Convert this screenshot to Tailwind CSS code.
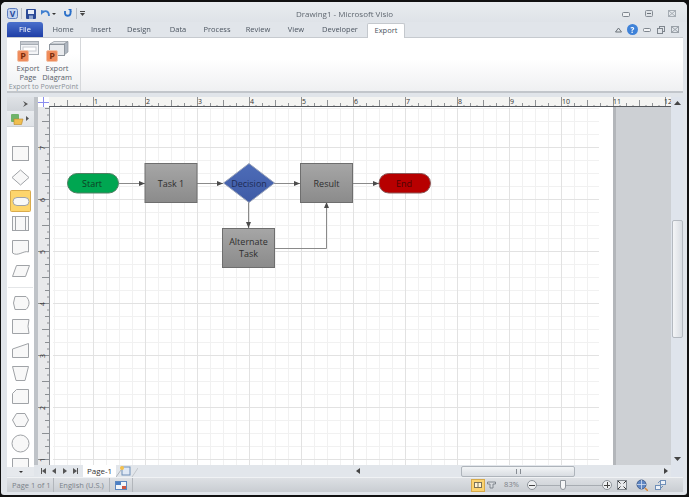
<!DOCTYPE html>
<html lang="en">
<head>
<meta charset="UTF-8">
<title>Drawing1 - Microsoft Visio</title>
<script src="https://cdn.jsdelivr.net/npm/@tailwindcss/browser@4"></script>
</head>
<body class="w-[689px] h-[497px] overflow-hidden bg-[#111] font-['Open_Sans',sans-serif] text-[7.5px] text-[#4c5560]">
<div class="h-full pt-[2px] pb-[2px] pl-[1px] pr-[2px] blur-[0.3px]">
<div class="h-full flex flex-col rounded-t-[5px] rounded-b-[3px] bg-[#e1e5ea] pl-[6px] pr-[4px] pb-[3px]">

  <!-- title bar -->
  <div class="h-[20px] -ml-[6px] -mr-[4px] pl-[6px] flex items-center relative shrink-0 bg-[linear-gradient(#e9ecef,#dfe3e8)] rounded-t-[5px]">
    <div class="flex items-center pt-[3px]">
      <svg width="11" height="11" viewBox="0 0 11 11"><rect x=".5" y=".5" width="10" height="10" rx="2" fill="#c3d4f0" stroke="#5f7fc0"/><text x="5.500" y="9" text-anchor="middle" font-size="8.500" font-weight="700" fill="#28489c">V</text></svg>
      <div class="w-px h-[11px] bg-[#b9bec5] ml-[3px]"></div>
      <svg width="10" height="10" viewBox="0 0 10 10" class="ml-[4px]"><rect width="10" height="10" rx="1" fill="#2c4b98"/><rect x="2" y="1" width="6" height="4" fill="#e8eef8"/><rect x="3" y="6.500" width="4" height="3.500" fill="#8fa6d0"/></svg>
      <svg width="9" height="8" viewBox="0 0 9 8" class="ml-[5px]"><path d="M2 2.500 C4 0 8 1 8 6" fill="none" stroke="#3f7fd0" stroke-width="1.800"/><path d="M0 0 L4 1 L0 5 Z" fill="#3f7fd0"/></svg>
      <span class="w-0 h-0 ml-[2px] border-x-[2px] border-t-[2px] border-x-transparent border-t-[#333]"></span>
      <svg width="9" height="9" viewBox="0 0 9 9" class="ml-[7px]"><path d="M2 2 V4.500 A2.800 2.800 0 0 0 7.500 4.500 V2" fill="none" stroke="#2a6fc8" stroke-width="1.800"/><path d="M5 0 L8.500 0 L8.500 3.500 Z" fill="#2a6fc8"/></svg>
      <div class="w-px h-[11px] bg-[#b9bec5] ml-[4px]"></div>
      <svg width="5" height="5" viewBox="0 0 5 5" class="ml-[3px]"><rect width="5" height="1" fill="#444"/><path d="M0 2 H5 L2.500 5 Z" fill="#444"/></svg>
    </div>
    <div class="absolute left-0 right-0 top-[6px] text-center text-[8px] text-[#5f6770] pl-[1px]">Drawing1 - Microsoft Visio</div>
    <div class="ml-auto flex items-center gap-[15px] pr-[11px] pt-[3px]">
      <svg width="8" height="6" viewBox="0 0 8 6"><rect x=".5" y="1.500" width="7" height="4" rx="1" fill="#eef0f2" stroke="#7f868e"/></svg>
      <svg width="8" height="7" viewBox="0 0 8 7"><rect x=".5" y=".5" width="7" height="6" rx="1" fill="#dfe3e7" stroke="#868d95"/><rect x="2" y="3" width="4" height="1" fill="#6c737a"/></svg>
      <svg width="8" height="7" viewBox="0 0 8 7"><rect x=".5" y=".5" width="7" height="6" fill="none" stroke="#a6adb4"/><path d="M1 1 L7 6 M7 1 L1 6" stroke="#a6adb4"/></svg>
    </div>
  </div>

  <!-- tabs -->
  <div class="h-[15px] flex items-stretch shrink-0 relative">
    <div class="w-[36px] rounded-t-[3px] bg-[linear-gradient(#4a70cc,#1f3ea6)] text-white flex items-center justify-center">File</div>
    <div class="w-[40px] flex items-center justify-center">Home</div>
    <div class="w-[36px] flex items-center justify-center">Insert</div>
    <div class="w-[40px] flex items-center justify-center">Design</div>
    <div class="w-[38px] flex items-center justify-center">Data</div>
    <div class="w-[40px] flex items-center justify-center">Process</div>
    <div class="w-[42px] flex items-center justify-center">Review</div>
    <div class="w-[34px] flex items-center justify-center">View</div>
    <div class="w-[54px] flex items-center justify-center">Developer</div>
    <div class="w-[38px] mt-px -mb-px bg-white border border-b-0 border-[#c4c8cd] rounded-t-[2px] flex items-center justify-center z-10">Export</div>
    <div class="ml-auto flex items-center gap-[5px] pr-[4px]">
      <svg width="7" height="6" viewBox="0 0 7 6"><path d="M.5 5 L3.500 1 L6.500 5 Z" fill="none" stroke="#6b7279"/></svg>
      <div class="w-[11px] h-[11px] rounded-full bg-[#3f82d8] text-white text-[8px] font-bold leading-[11px] text-center">?</div>
      <svg width="8" height="4" viewBox="0 0 8 4"><rect x=".5" y=".5" width="7" height="3" rx="1" fill="#f2f3f5" stroke="#7f868e"/></svg>
      <svg width="8" height="8" viewBox="0 0 8 8" class="ml-px"><rect x="2.500" y=".5" width="5" height="5" fill="none" stroke="#7f868e"/><rect x=".5" y="2.500" width="5" height="5" fill="#e1e5ea" stroke="#7f868e"/></svg>
      <svg width="8" height="7" viewBox="0 0 8 7" class="ml-px"><rect x=".5" y=".5" width="7" height="6" fill="none" stroke="#9aa1a8"/><path d="M1 1 L7 6 M7 1 L1 6" stroke="#9aa1a8"/></svg>
    </div>
  </div>

  <!-- ribbon -->
  <div class="h-[56px] shrink-0 flex bg-[linear-gradient(#fff_40%,#eff0f2)] border-t border-[#c6cacf] border-b-2 border-b-[#c2c6cb]">
    <div class="w-[74px] flex flex-col border-r border-[#d6d8db] bg-[linear-gradient(#fff_30%,#eef0f2)]">
      <div class="flex-1 flex pl-[8px] gap-[3px] pt-[3px]">
        <div class="w-[26px] flex flex-col items-center">
          <svg width="22" height="22" viewBox="0 0 22 22"><rect x="3.500" y=".5" width="18" height="13" fill="#f4f5f7" stroke="#a7adb4"/><rect x="3.500" y=".5" width="18" height="3" fill="#c8ccd2" stroke="#a7adb4"/><rect x="6" y="6" width="13" height="4" fill="#fff" stroke="#c8ccd2"/><rect x=".5" y="9.500" width="11" height="11" rx="1.500" fill="#ef8c5c" stroke="#f3c3a8"/><text x="6" y="18" text-anchor="middle" font-size="9" font-weight="700" fill="#7a2c0c">P</text></svg>
          <div class="leading-[9px] text-center text-[#59616a] mt-px">Export Page</div>
        </div>
        <div class="w-[26px] flex flex-col items-center">
          <svg width="23" height="22" viewBox="0 0 23 22"><path d="M4 3 L8 .5 H22 L18 3 Z" fill="#e3e6ea" stroke="#8f969e" stroke-width=".7"/><path d="M18 3 L22 .5 V11 L18 14 Z" fill="#aeb6c0" stroke="#8f969e" stroke-width=".7"/><rect x="3.500" y="3.500" width="15" height="11" fill="#e9ebee" stroke="#8f969e"/><rect x=".5" y="9.500" width="11" height="11" rx="1.500" fill="#ef8c5c" stroke="#f3c3a8"/><text x="6" y="18" text-anchor="middle" font-size="9" font-weight="700" fill="#7a2c0c">P</text></svg>
          <div class="leading-[9px] text-center text-[#59616a] mt-px">Export Diagram</div>
        </div>
      </div>
      <div class="h-[11px] text-center text-[7px] leading-[10px] text-[#8b9299] whitespace-nowrap">Export to PowerPoint</div>
    </div>
  </div>

  <!-- workspace -->
  <div class="flex-1 min-h-0 flex pt-[4px]">
    <!-- shapes stencil -->
    <div class="w-[27px] h-[379px] shrink-0 flex flex-col bg-white">
      <div class="h-[14px] bg-[linear-gradient(#dfe2e6,#d0d4d9)] flex items-center justify-end pr-[6px]">
        <svg width="5" height="6" viewBox="0 0 5 6"><path d="M0 0 L5 3 L0 6 L2 3 Z" fill="#555"/></svg>
      </div>
      <div class="h-[16px] bg-[linear-gradient(#e9ecef,#e0e3e7)] flex items-center pl-[4px] gap-[2px] border-b border-[#cfd3d8]">
        <svg width="13" height="12" viewBox="0 0 13 12"><rect x="0" y="1" width="8" height="8" rx="1" fill="#6fb36a"/><path d="M3 6 H12 L10.500 11.500 H3 Z" fill="#f0bf50" stroke="#b8862a" stroke-width=".6"/></svg>
        <svg width="3" height="5" viewBox="0 0 3 5"><path d="M0 0 L3 2.500 L0 5 Z" fill="#555"/></svg>
      </div>
      <svg width="27" height="340" viewBox="0 0 27 340" class="block" fill="#f8f8f8" stroke="#a0a3a7" stroke-width="1">
        <g transform="translate(-7,-127)">
          <rect x="12.500" y="146.500" width="16" height="14" />
          <path d="M20.500 170 L29 177.500 L20.500 185 L12 177.500 Z"/>
          <rect x="10.500" y="190.500" width="20" height="21" rx="1" fill="#fdd56c" stroke="#d9ab4c"/>
          <rect x="13" y="197.500" width="16" height="8" rx="4"/>
          <rect x="12.500" y="216.500" width="16" height="14"/>
          <path d="M15.500 216.500 V230.500 M25.500 216.500 V230.500"/>
          <path d="M12.500 240.500 H28.500 V252 C24 250 18 257 12.500 253 Z"/>
          <path d="M16.500 265.500 H29.500 L25.500 276.500 H12.500 Z"/>
          <path d="M8 287.500 H33" stroke="#e4e6e8"/>
          <path d="M15 296.500 H26 C30 300 30 306 26 309.500 H15 Q12 303 15 296.500 Z"/>
          <path d="M12.500 319.500 H29 Q27 326 29 333.500 H12.500 Z"/>
          <path d="M12.500 349 L28.500 343.500 V357.500 H12.500 Z"/>
          <path d="M12.500 366.500 H28.500 L25 380.500 H16 Z"/>
          <path d="M16.500 389.500 H28.500 V403.500 H12.500 V393.500 Z"/>
          <path d="M16.500 413.500 H25 L28.500 420 L25 426.500 H16 L12.500 420 Z"/>
          <circle cx="20.500" cy="443.500" r="8.500"/>
          <path d="M12.500 467 V458.500 H28.500 V467"/>
        </g>
      </svg>
      <div class="h-[9px] bg-[#e6e9ed] flex items-center justify-center">
        <span class="w-0 h-0 border-x-[2px] border-t-[2px] border-x-transparent border-t-[#333]"></span>
      </div>
    </div>
    <div class="w-[4px] h-[368px] shrink-0 bg-[#bfc3c8]"></div>

    <!-- drawing area with rulers and page tabs -->
    <div class="flex-1 min-w-0 flex flex-col">
      <svg width="633" height="368" viewBox="38 97 633 368" class="block shrink-0" font-family="Open Sans, sans-serif">
        <defs>
          <pattern id="minor" x="41" y="95" width="13" height="13" patternUnits="userSpaceOnUse"><path d="M.5 0 V13 M0 .5 H13" stroke="#f1f1f1" fill="none"/></pattern>
          <pattern id="major" x="41" y="95" width="52" height="52" patternUnits="userSpaceOnUse"><path d="M.5 0 V52 M0 .5 H52" stroke="#e2e2e2" fill="none"/></pattern>
          <pattern id="rh" x="41" y="97" width="52" height="10" patternUnits="userSpaceOnUse"><path d="M.5 0 V10 M26.500 3 V10 M13.500 6 V10 M39.500 6 V10 M7 8 V10 M20 8 V10 M33 8 V10 M46 8 V10" stroke="#75797e" stroke-width=".8" fill="none"/></pattern>
          <pattern id="rv" x="38" y="95" width="11" height="52" patternUnits="userSpaceOnUse"><path d="M0 .5 H11 M4 26.500 H11 M7 13.500 H11 M7 39.500 H11 M9 7 H11 M9 20 H11 M9 33 H11 M9 46 H11" stroke="#75797e" stroke-width=".8" fill="none"/></pattern>
          <linearGradient id="gray" x1="0" y1="0" x2="0" y2="1"><stop offset="0" stop-color="#a6a6a6"/><stop offset="1" stop-color="#8b8b8b"/></linearGradient>
          <linearGradient id="blue" x1="0" y1="0" x2="0" y2="1"><stop offset="0" stop-color="#4d6cb8"/><stop offset="1" stop-color="#3f5ba6"/></linearGradient>
          <marker id="arrow" viewBox="0 0 6 6" refX="6" refY="3" markerWidth="6" markerHeight="6" markerUnits="userSpaceOnUse" orient="auto"><path d="M0 .5 L6 3 L0 5.500 Z" fill="#4b4b4b"/></marker>
        </defs>
        <rect x="38" y="97" width="633" height="368" fill="#cdd0d4"/>
        <rect x="613" y="107" width="3" height="358" fill="#b3b6ba"/>
        <rect x="50" y="107" width="563" height="358" fill="#fff"/>
        <rect x="53" y="108" width="546" height="357" fill="url(#minor)"/>
        <rect x="53" y="108" width="546" height="357" fill="url(#major)"/>
        <!-- rulers -->
        <rect x="38" y="97" width="633" height="10" fill="#f4f4f2"/>
        <rect x="49" y="97" width="622" height="10" fill="url(#rh)"/>
        <rect x="38" y="106" width="633" height="1" fill="#55595e"/>
        <rect x="38" y="107" width="11" height="358" fill="#e8e9eb"/>
        <rect x="38" y="107" width="11" height="358" fill="url(#rv)"/>
        <rect x="49" y="107" width="1" height="358" fill="#8c9096"/>
        <rect x="38" y="97" width="11" height="10" fill="#fff"/>
        <path d="M43.500 97 V107 M38 102.500 H49" stroke="#8b8df0"/>
        <g font-size="7" fill="#333">
          <text x="94" y="104">1</text><text x="146" y="104">2</text><text x="198" y="104">3</text><text x="250" y="104">4</text><text x="302" y="104">5</text><text x="354" y="104">6</text><text x="406" y="104">7</text><text x="458" y="104">8</text><text x="510" y="104">9</text><text x="562" y="104">10</text><text x="613" y="104">11</text><text x="664" y="104">12</text>
          <text transform="translate(45,146) rotate(-90)" text-anchor="end">7</text>
          <text transform="translate(45,198) rotate(-90)" text-anchor="end">6</text>
          <text transform="translate(45,250) rotate(-90)" text-anchor="end">5</text>
          <text transform="translate(45,302) rotate(-90)" text-anchor="end">4</text>
          <text transform="translate(45,354) rotate(-90)" text-anchor="end">3</text>
          <text transform="translate(45,406) rotate(-90)" text-anchor="end">2</text>
          <text transform="translate(45,458) rotate(-90)" text-anchor="end">1</text>
        </g>
        <!-- connectors -->
        <g fill="none" stroke="#8a8a8a" stroke-width="1" marker-end="url(#arrow)">
          <path d="M119 183.500 H145"/><path d="M197 183.500 H223"/><path d="M274 183.500 H300"/><path d="M353 183.500 H379"/>
          <path d="M248.500 202 V228"/><path d="M275 248.500 H326.500 V202"/>
        </g>
        <!-- flowchart -->
        <g stroke="#6e6e6e" stroke-width="1">
          <rect x="67.500" y="173.500" width="51" height="19.500" rx="9.700" fill="#00a651" stroke="#4f7f62"/>
          <rect x="145" y="163.500" width="52" height="39" fill="url(#gray)"/>
          <path d="M249 163.500 L274.500 183 L249 202.500 L223.500 183 Z" fill="url(#blue)" stroke="#9aa3b8"/>
          <rect x="300.500" y="163.500" width="52" height="39" fill="url(#gray)"/>
          <rect x="379" y="173.500" width="51.500" height="19.500" rx="9.700" fill="#b70000" stroke="#8a5a5a"/>
          <rect x="222.500" y="228.500" width="52" height="39" fill="url(#gray)"/>
        </g>
        <g font-size="9" text-anchor="middle" fill="#2e2e2e">
          <text x="92" y="186.500" fill="#0d3d22">Start</text>
          <text x="171" y="186.500">Task 1</text>
          <text x="249" y="186.500" fill="#1e2c55">Decision</text>
          <text x="326.500" y="186.500">Result</text>
          <text x="404" y="186.500" fill="#4c0505">End</text>
          <text x="248.500" y="244.500">Alternate</text>
          <text x="248.500" y="257">Task</text>
        </g>
      </svg>

      <!-- page tabs and horizontal scrollbar -->
      <div class="h-[12px] shrink-0 flex items-center bg-[#e2e6eb]">
        <div class="w-[45px] flex items-center justify-between pl-[3px] pr-[5px]">
          <svg width="5" height="6" viewBox="0 0 5 6"><rect width="1" height="6" fill="#555"/><path d="M5 0 V6 L1 3 Z" fill="#555"/></svg>
          <svg width="4" height="6" viewBox="0 0 4 6"><path d="M4 0 V6 L0 3 Z" fill="#555"/></svg>
          <svg width="4" height="6" viewBox="0 0 4 6"><path d="M0 0 V6 L4 3 Z" fill="#555"/></svg>
          <svg width="5" height="6" viewBox="0 0 5 6"><path d="M0 0 V6 L4 3 Z" fill="#555"/><rect x="4" width="1" height="6" fill="#555"/></svg>
        </div>
        <div class="w-[33px] h-full bg-white text-[8px] text-[#333] text-center leading-[12px]">Page-1</div>
        <svg width="22" height="12" viewBox="0 0 22 12" class="shrink-0"><path d="M0 12 L5 5" stroke="#b0b5bb"/><rect x="6" y="2" width="8" height="8" fill="#dfe8f4" stroke="#6f8fb8"/><circle cx="6" cy="3" r="2" fill="#f5c04a"/><path d="M16 12 L22 3" stroke="#c2c6cb"/></svg>
        <div class="w-[218px] shrink-0"></div>
        <svg width="4" height="6" viewBox="0 0 4 6" class="shrink-0"><path d="M4 0 V6 L0 3 Z" fill="#444"/></svg>
        <div class="w-[101px] shrink-0"></div>
        <div class="w-[114px] h-[11px] shrink-0 border border-[#aeb4bb] rounded-[2px] bg-[linear-gradient(#f2f4f6,#d9dde2)] flex items-center justify-center">
          <div class="w-[5px] h-[5px] border-x border-[#868c93]"></div>
        </div>
        <div class="flex-1"></div>
        <svg width="4" height="6" viewBox="0 0 4 6" class="shrink-0 mr-[3px]"><path d="M0 0 V6 L4 3 Z" fill="#444"/></svg>
      </div>
    </div>

    <!-- vertical scrollbar -->
    <div class="w-[12px] h-[380px] shrink-0 flex flex-col items-center bg-[#dfe4ec]">
      <svg width="7" height="4" viewBox="0 0 7 4" class="mt-[4px]"><path d="M0 4 L3.500 0 L7 4 Z" fill="#444"/></svg>
      <div class="w-[11px] h-[118px] mt-[115px] border border-[#b4b9c0] rounded-[2px] bg-[linear-gradient(90deg,#f4f5f7,#d9dde3)]"></div>
      <div class="flex-1"></div>
      <svg width="7" height="4" viewBox="0 0 7 4" class="mb-[16px]"><path d="M0 0 L7 0 L3.500 4 Z" fill="#444"/></svg>
    </div>
  </div>

  <!-- status bar -->
  <div class="h-[15px] shrink-0 flex items-center bg-[linear-gradient(#dde0e4,#c9cdd2)] border-t border-[#f0f2f4] text-[#7b828a]">
    <div class="w-[47px] pl-[5px] h-full leading-[14px] border-r border-[#b2b6bb] whitespace-nowrap">Page 1 of 1</div>
    <div class="w-[56px] h-full text-center leading-[14px] border-r border-[#b2b6bb] whitespace-nowrap">English (U.S.)</div>
    <div class="w-[23px] h-full flex items-center justify-center border-r border-[#b2b6bb]">
      <svg width="12" height="9" viewBox="0 0 12 9"><rect x=".5" y=".5" width="11" height="8" fill="#f2f5f9" stroke="#5b86bf"/><rect x="1" y="1" width="5" height="3" fill="#4b7fc4"/><rect x="7" y="5" width="4" height="3" fill="#d0563f"/></svg>
    </div>
    <div class="ml-auto flex items-center h-full">
      <div class="w-[14px] h-[13px] bg-[#fbd370] border border-[#d6a94a] flex items-center justify-center">
        <svg width="8" height="6" viewBox="0 0 8 6"><rect x=".5" y=".5" width="7" height="5" fill="#fff5d6" stroke="#7c7256"/><path d="M4 0 V6" stroke="#7c7256"/></svg>
      </div>
      <svg width="9" height="9" viewBox="0 0 9 9" class="ml-[2px]"><path d="M.5 1 H8.500 V3 H6 V7 H3 V3 H.5 Z" fill="#d8dbdf" stroke="#70767d" stroke-width=".8"/></svg>
      <div class="w-[31px] text-center text-[#7a8088]">83%</div>
      <div class="w-[10px] h-[10px] rounded-full bg-[#eef0f2] border border-[#8e949b] flex items-center justify-center"><div class="w-[6px] h-px bg-[#444]"></div></div>
      <div class="relative w-[65px] h-px bg-[#a7acb2]">
        <div class="absolute left-[23px] -top-[5px] w-[6px] h-[10px] bg-[#f5f6f7] border border-[#8e949b] rounded-b-[3px]"></div>
      </div>
      <div class="w-[10px] h-[10px] rounded-full bg-[#eef0f2] border border-[#8e949b] relative">
        <div class="absolute left-[1px] top-[3.500px] w-[6px] h-px bg-[#444]"></div>
        <div class="absolute left-[3.500px] top-[1px] w-px h-[6px] bg-[#444]"></div>
      </div>
      <svg width="10" height="10" viewBox="0 0 10 10" class="ml-[5px]"><rect x=".5" y=".5" width="9" height="9" fill="#e7e9ec" stroke="#7f858c"/><path d="M1 1 L3.500 3.500 M9 1 L6.500 3.500 M1 9 L3.500 6.500 M9 9 L6.500 6.500" stroke="#333"/></svg>
      <svg width="12" height="12" viewBox="0 0 12 12" class="ml-[9px]"><circle cx="5.500" cy="5.500" r="4.500" fill="#5e86c4" stroke="#47628f"/><path d="M1 5.500 H10 M5.500 1 V10" stroke="#d5e0f0" stroke-width=".8"/><path d="M9 9 L12 12" stroke="#d9893d" stroke-width="1.500"/></svg>
      <svg width="11" height="10" viewBox="0 0 11 10" class="ml-[7px]"><rect x="5.500" y=".5" width="5" height="4" fill="#eef2f8" stroke="#6f8fb8"/><rect x=".5" y="5.500" width="5" height="4" fill="#eef2f8" stroke="#6f8fb8"/><path d="M3 3 L5 1 M8 6 L6 8" stroke="#6f8fb8"/></svg>
      <div class="w-[17px]"></div>
    </div>
  </div>
</div>
</div>
</body>
</html>
